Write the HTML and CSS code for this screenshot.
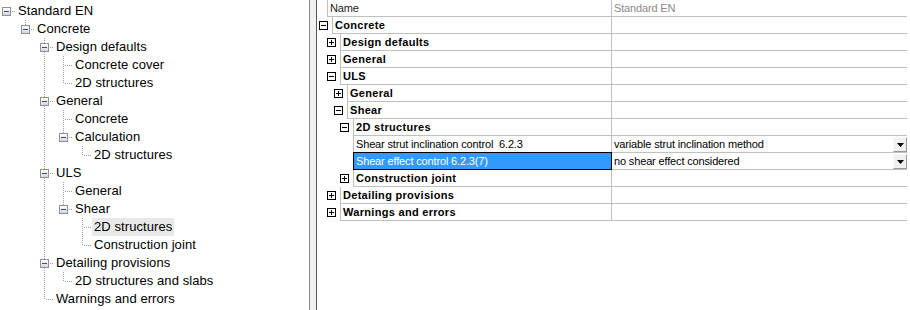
FILE: index.html
```html
<!DOCTYPE html>
<html>
<head>
<meta charset="utf-8">
<title>Standard EN</title>
<link rel="stylesheet" href="styles.css">
</head>
<body>
<div class="app">
  <div class="tree">
    <div class="tn"><span class="c r"><i class="tb"></i></span><span class="lbl">Standard EN</span></div>
    <div class="tn"><span class="c"></span><span class="c e"><i class="tb"></i></span><span class="lbl">Concrete</span></div>
    <div class="tn"><span class="c"></span><span class="c"></span><span class="c t"><i class="tb"></i></span><span class="lbl">Design defaults</span></div>
    <div class="tn"><span class="c"></span><span class="c"></span><span class="c v"></span><span class="c t"></span><span class="lbl">Concrete cover</span></div>
    <div class="tn"><span class="c"></span><span class="c"></span><span class="c v"></span><span class="c e"></span><span class="lbl">2D structures</span></div>
    <div class="tn"><span class="c"></span><span class="c"></span><span class="c t"><i class="tb"></i></span><span class="lbl">General</span></div>
    <div class="tn"><span class="c"></span><span class="c"></span><span class="c v"></span><span class="c t"></span><span class="lbl">Concrete</span></div>
    <div class="tn"><span class="c"></span><span class="c"></span><span class="c v"></span><span class="c e"><i class="tb"></i></span><span class="lbl">Calculation</span></div>
    <div class="tn"><span class="c"></span><span class="c"></span><span class="c v"></span><span class="c"></span><span class="c e"></span><span class="lbl">2D structures</span></div>
    <div class="tn"><span class="c"></span><span class="c"></span><span class="c t"><i class="tb"></i></span><span class="lbl">ULS</span></div>
    <div class="tn"><span class="c"></span><span class="c"></span><span class="c v"></span><span class="c t"></span><span class="lbl">General</span></div>
    <div class="tn"><span class="c"></span><span class="c"></span><span class="c v"></span><span class="c e"><i class="tb"></i></span><span class="lbl">Shear</span></div>
    <div class="tn"><span class="c"></span><span class="c"></span><span class="c v"></span><span class="c"></span><span class="c t"></span><span class="lbl sel">2D structures</span></div>
    <div class="tn"><span class="c"></span><span class="c"></span><span class="c v"></span><span class="c"></span><span class="c e"></span><span class="lbl">Construction joint</span></div>
    <div class="tn"><span class="c"></span><span class="c"></span><span class="c t"><i class="tb"></i></span><span class="lbl">Detailing provisions</span></div>
    <div class="tn"><span class="c"></span><span class="c"></span><span class="c v"></span><span class="c e"></span><span class="lbl">2D structures and slabs</span></div>
    <div class="tn"><span class="c"></span><span class="c"></span><span class="c e"></span><span class="lbl">Warnings and errors</span></div>
  </div>
  <div class="splitter"></div>
  <div class="grid">
    <div class="ghead"><span class="hgut"></span><span class="hname">Name</span><span class="hval">Standard EN</span></div>
    <div class="row"><span class="gut l0"><i class="ex"></i></span><span class="name b">Concrete</span><span class="val"></span></div>
    <div class="row"><span class="gut l1"><i class="ex plus"></i></span><span class="name b">Design defaults</span><span class="val"></span></div>
    <div class="row"><span class="gut l1"><i class="ex plus"></i></span><span class="name b">General</span><span class="val"></span></div>
    <div class="row"><span class="gut l1"><i class="ex"></i></span><span class="name b">ULS</span><span class="val"></span></div>
    <div class="row"><span class="gut l2"><i class="ex plus"></i></span><span class="name b">General</span><span class="val"></span></div>
    <div class="row"><span class="gut l2"><i class="ex"></i></span><span class="name b">Shear</span><span class="val"></span></div>
    <div class="row"><span class="gut l3"><i class="ex"></i></span><span class="name b">2D structures</span><span class="val"></span></div>
    <div class="row"><span class="gut l3"></span><span class="name">Shear strut inclination control&nbsp; 6.2.3</span><span class="val"><span class="vt">variable strut inclination method</span><i class="dd"><svg width="7" height="4" viewBox="0 0 7 4"><polygon points="0,0 7,0 3.5,4" fill="#000"/></svg></i></span></div>
    <div class="row"><span class="gut l3"></span><span class="name hl">Shear effect control 6.2.3(7)</span><span class="val"><span class="vt">no shear effect considered</span><i class="dd"><svg width="7" height="4" viewBox="0 0 7 4"><polygon points="0,0 7,0 3.5,4" fill="#000"/></svg></i></span></div>
    <div class="row"><span class="gut l3"><i class="ex plus"></i></span><span class="name b">Construction joint</span><span class="val"></span></div>
    <div class="row"><span class="gut l1"><i class="ex plus"></i></span><span class="name b">Detailing provisions</span><span class="val"></span></div>
    <div class="row"><span class="gut l1"><i class="ex plus"></i></span><span class="name b">Warnings and errors</span><span class="val"></span></div>
  </div>
</div>
</body>
</html>
```

FILE: styles.css
```css
html, body {
  margin: 0;
  padding: 0;
  background: #fff;
  overflow: hidden;
}

.app {
  display: flex;
  width: 910px;
  height: 310px;
}

/* ---------- left tree ---------- */
.tree {
  width: 309px;
  flex: none;
  padding-top: 2px;
  font-family: "Liberation Sans", Arial, sans-serif;
  font-size: 13px;
  letter-spacing: 0.08px;
  color: #000;
  overflow: hidden;
}

.tn {
  display: flex;
  height: 18px;
  margin-left: -3px;
}

.c {
  flex: none;
  width: 19px;
  height: 18px;
}

.c.v {
  background: repeating-linear-gradient(to bottom, #a0a0a0 0 1px, transparent 1px 2px) 9px 0 / 1px 18px no-repeat;
}

.c.t {
  background:
    repeating-linear-gradient(to bottom, #a0a0a0 0 1px, transparent 1px 2px) 9px 0 / 1px 18px no-repeat,
    repeating-linear-gradient(to right, #a0a0a0 0 1px, transparent 1px 2px) 11px 9px / 8px 1px no-repeat;
}

.c.e {
  background:
    repeating-linear-gradient(to bottom, #a0a0a0 0 1px, transparent 1px 2px) 9px 0 / 1px 10px no-repeat,
    repeating-linear-gradient(to right, #a0a0a0 0 1px, transparent 1px 2px) 11px 9px / 8px 1px no-repeat;
}

.c.r {
  background:
    repeating-linear-gradient(to right, #a0a0a0 0 1px, transparent 1px 2px) 11px 9px / 8px 1px no-repeat;
}

.tb {
  display: block;
  box-sizing: border-box;
  width: 9px;
  height: 9px;
  margin: 5px 0 0 5px;
  border: 1px solid #8f8f9c;
  background:
    linear-gradient(#2f4fa0, #2f4fa0) center / 5px 1px no-repeat,
    linear-gradient(#ffffff, #d6d6dc);
}

.lbl {
  padding: 0 2px;
  height: 18px;
  line-height: 18px;
  white-space: nowrap;
}

.lbl.sel {
  background: #e8e8e8;
}

/* ---------- splitter ---------- */
.splitter {
  flex: none;
  width: 8px;
  box-sizing: border-box;
  background: #f0f0f0;
  border-left: 1px solid #8a8a8a;
  border-right: 1px solid #5a5a5a;
}

/* ---------- property grid ---------- */
.grid {
  width: 590px;
  flex: none;
  font-family: "Liberation Sans", Arial, sans-serif;
  font-size: 11px;
  letter-spacing: -0.15px;
  color: #000;
}

.ghead {
  display: flex;
  height: 17px;
}

.hgut {
  flex: none;
  width: 10px;
}

.hname {
  flex: 1;
  box-sizing: border-box;
  border-left: 1px solid #c0c0c0;
  border-bottom: 1px solid #c0c0c0;
  padding-left: 2px;
  line-height: 16px;
  color: #1a1a1a;
}

.hval {
  flex: none;
  width: 296px;
  box-sizing: border-box;
  border-left: 1px solid #c0c0c0;
  border-bottom: 1px solid #c0c0c0;
  padding-left: 2px;
  line-height: 16px;
  color: #8a8a8a;
}

.row {
  display: flex;
  height: 17px;
}

.gut {
  flex: none;
  display: flex;
  justify-content: flex-end;
  align-items: flex-start;
}
.gut.l0 { width: 15px; }
.gut.l1 { width: 23px; }
.gut.l2 { width: 30px; }
.gut.l3 { width: 36px; }

.ex {
  display: block;
  box-sizing: border-box;
  width: 9px;
  height: 9px;
  margin: 4px 4px 0 0;
  border: 1px solid #000;
  background:
    linear-gradient(#000, #000) center / 5px 1px no-repeat,
    #fff;
}

.ex.plus {
  background:
    linear-gradient(#000, #000) center / 5px 1px no-repeat,
    linear-gradient(#000, #000) center / 1px 5px no-repeat,
    #fff;
}

.name {
  flex: 1;
  min-width: 0;
  box-sizing: border-box;
  border-left: 1px solid #c0c0c0;
  border-bottom: 1px solid #c0c0c0;
  padding-left: 2px;
  line-height: 16px;
  white-space: nowrap;
  overflow: hidden;
}

.name.b {
  font-weight: bold;
  letter-spacing: 0.3px;
}

.name.hl {
  position: relative;
  z-index: 1;
  background: #3399ff;
  color: #fff;
  border-left-color: #000;
  border-bottom-color: #000;
  box-shadow: 0 -1px 0 #000, 1px 0 0 #000, 1px -1px 0 #000;
}

.val {
  flex: none;
  width: 296px;
  display: flex;
  box-sizing: border-box;
  border-left: 1px solid #c0c0c0;
  border-bottom: 1px solid #c0c0c0;
  padding-left: 2px;
  line-height: 16px;
  white-space: nowrap;
}

.vt {
  flex: 1;
}

.dd {
  flex: none;
  display: flex;
  align-items: center;
  justify-content: center;
  box-sizing: border-box;
  width: 14px;
  height: 15px;
  margin: 1px 0 0 0;
  background: #f0f0f0;
  border-top: 1px solid #fafafa;
  border-left: 1px solid #fafafa;
  border-right: 1px solid #9a9a9a;
  border-bottom: 1px solid #9a9a9a;
}

.dd svg {
  display: block;
}
```
